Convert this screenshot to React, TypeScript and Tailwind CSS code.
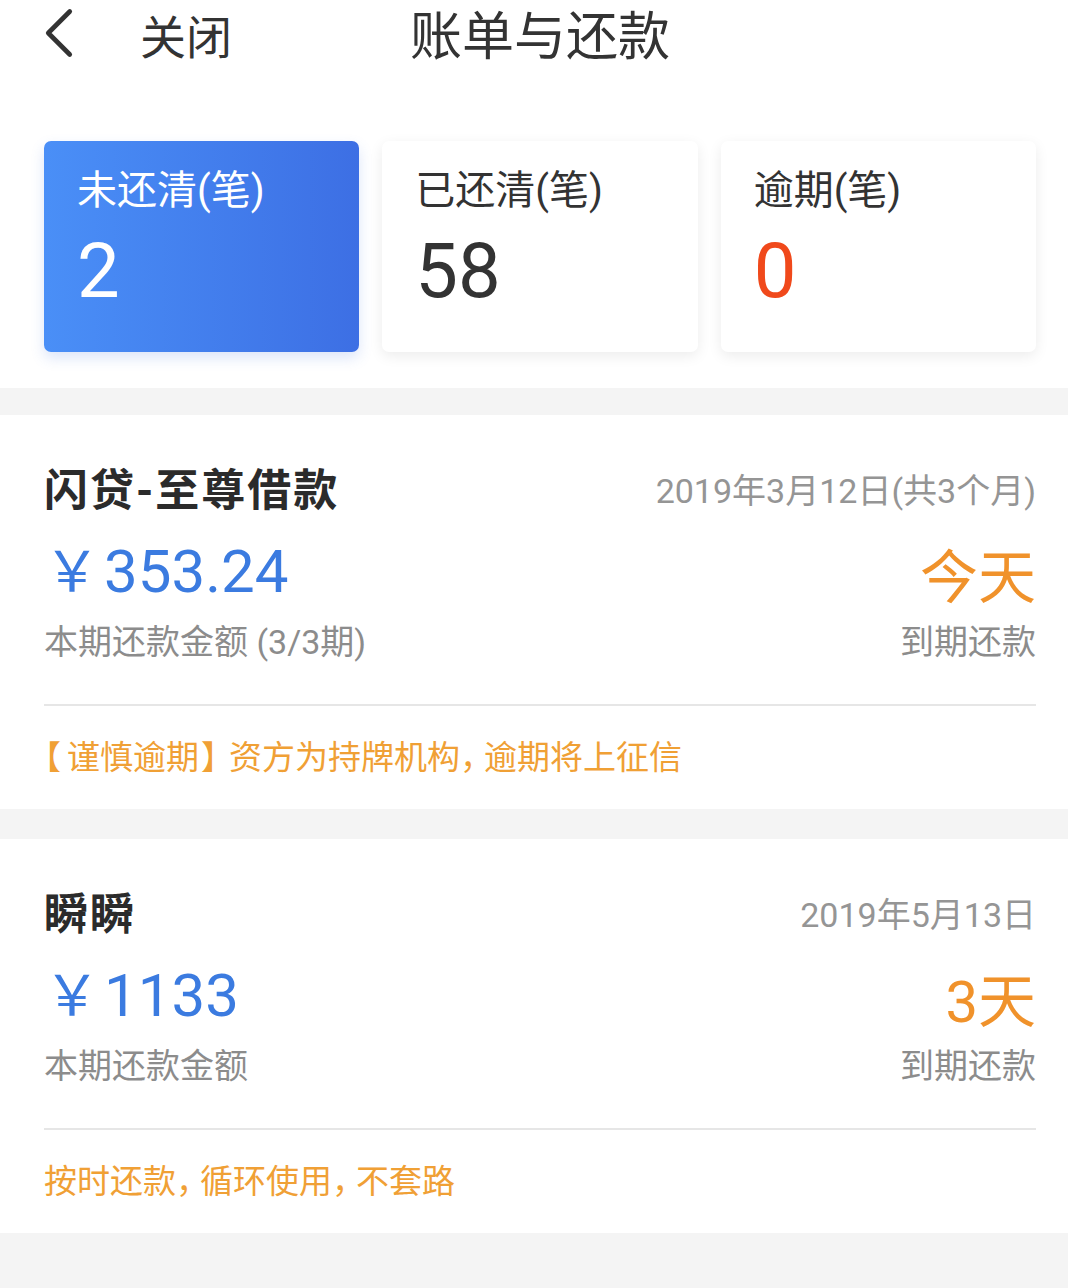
import { ChevronLeft } from 'lucide-react';

const font = "font-['Roboto','Noto_Sans_CJK_SC',sans-serif]";

const stats = [
  { label: '未还清(笔)', value: '2', active: true, valueClass: 'text-white' },
  { label: '已还清(笔)', value: '58', active: false, valueClass: 'text-[#333333]' },
  { label: '逾期(笔)', value: '0', active: false, valueClass: 'text-[#f0491b]' },
];

const bills = [
  {
    name: '闪贷-至尊借款',
    date: '2019年3月12日(共3个月)',
    amount: '353.24',
    sub: '本期还款金额 (3/3期)',
    due: '今天',
    note: '【谨慎逾期】资方为持牌机构，逾期将上征信',
  },
  {
    name: '瞬瞬',
    date: '2019年5月13日',
    amount: '1133',
    sub: '本期还款金额',
    due: '3天',
    note: '按时还款，循环使用，不套路',
  },
];

// the app sets full-width punctuation tighter than the font's em box
function Tight({ text }: { text: string }) {
  return (
    <>
      {text.split('').map((ch, i) => {
        if (ch === '【') return <span key={i} className="-ml-[16px] mr-[6px]">{ch}</span>;
        if (ch === '】') return <span key={i} className="ml-[2px] -mr-[5px]">{ch}</span>;
        if (ch === '，') return <span key={i} className="tracking-[-9px]">{ch}</span>;
        return ch;
      })}
    </>
  );
}

function BillCard({ bill }: { bill: (typeof bills)[number] }) {
  return (
    <section className="bg-white pl-[44px] pr-[32px] pt-[48px] pb-[29px]">
      <div className="flex h-[56px] items-center justify-between">
        <h2 className="text-[44px] font-bold leading-none tracking-[2px] text-[#2b2b2b]">{bill.name}</h2>
        <span className="text-[34px] leading-none text-[#959595]">{bill.date}</span>
      </div>
      <div className="mt-[18px] flex items-start justify-between">
        <div>
          <div className="flex h-[70px] items-center text-[60px] leading-none text-[#3b7be0]">
            <span className="mr-[4px] text-[56px]">￥</span>
            <span>{bill.amount}</span>
          </div>
          <p className="mt-[13px] h-[44px] text-[34px] leading-[44px] text-[#8c8c8c]">{bill.sub}</p>
        </div>
        <div className="flex flex-col items-end">
          <div className="mt-[6px] flex h-[70px] items-center text-[58px] leading-none text-[#f0922b]">
            {bill.due}
          </div>
          <p className="mt-[7px] h-[44px] text-[34px] leading-[44px] text-[#8c8c8c]">到期还款</p>
        </div>
      </div>
      <div className="mt-[40px] h-[2px] bg-[#e6e6e6]" />
      <p className="mt-[30px] h-[44px] text-[33px] leading-[44px] text-[#f0a035]">
        <Tight text={bill.note} />
      </p>
    </section>
  );
}

export default function App() {
  return (
    <main className={`${font} min-h-[1288px] w-[1068px] bg-[#f4f4f4]`}>
      <div className="bg-white">
        <header className="grid h-[74px] grid-cols-[1fr_auto_1fr] items-center">
          <div className="flex items-center pl-[16px]">
            <ChevronLeft className="-mt-[10px] h-[86px] w-[86px] text-[#333333]" strokeWidth={1.3} />
            <span className="ml-[38px] text-[46px] leading-none text-[#333333]">关闭</span>
          </div>
          <h1 className="ml-[12px] text-[52px] leading-none text-[#333333]">账单与还款</h1>
          <div />
        </header>

        <div className="grid grid-cols-3 gap-[23px] pl-[44px] pr-[32px] pt-[67px] pb-[36px]">
          {stats.map((s) => (
            <div
              key={s.label}
              className={`h-[211px] rounded-[7px] pl-[33px] pt-[24px] ${
                s.active
                  ? 'bg-gradient-to-r from-[#4a8ff7] to-[#3d6fe4] shadow-[0_6px_14px_rgba(60,110,220,0.18)]'
                  : 'bg-white shadow-[0_4px_14px_rgba(0,0,0,0.08)]'
              }`}
            >
              <p className={`text-[40px] leading-[52px] ${s.active ? 'text-white' : 'text-[#333333]'}`}>{s.label}</p>
              <p className={`mt-[14px] text-[76px] leading-[80px] ${s.valueClass}`}>{s.value}</p>
            </div>
          ))}
        </div>
      </div>

      <div className="mt-[27px]">
        <BillCard bill={bills[0]} />
      </div>
      <div className="mt-[30px]">
        <BillCard bill={bills[1]} />
      </div>
    </main>
  );
}
